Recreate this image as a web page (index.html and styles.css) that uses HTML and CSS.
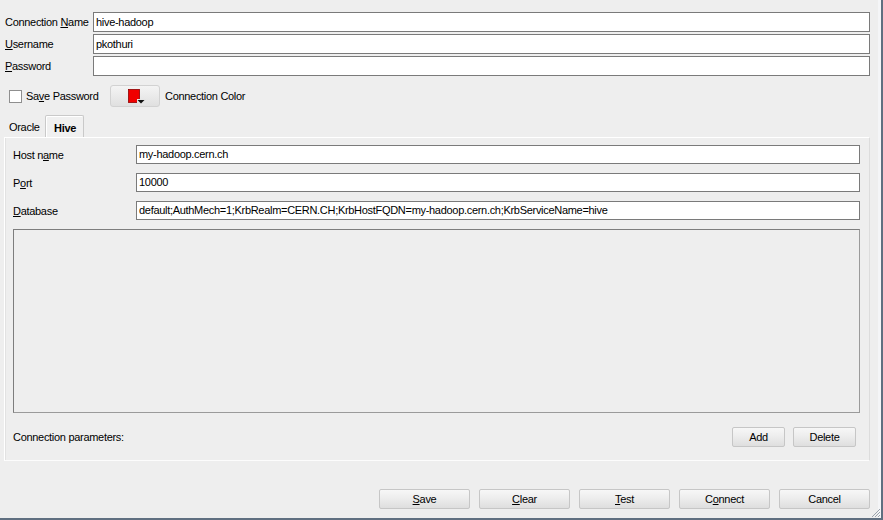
FILE: index.html
```html
<!DOCTYPE html>
<html lang="en">
<head>
    <meta charset="UTF-8">
    <title>New / Select Database Connection</title>
    <link rel="stylesheet" href="styles.css">
</head>
<body>
    <div class="dialog">
        <div class="fields">
            <label>Connection <u>N</u>ame</label>
            <div class="input">hive-hadoop</div>
            <label><u>U</u>sername</label>
            <div class="input">pkothuri</div>
            <label><u>P</u>assword</label>
            <div class="input"></div>
        </div>

        <div class="save-row">
            <span class="check"></span>
            <span class="save-label">Sa<u>v</u>e Password</span>
            <button class="color-btn">
                <svg width="20" height="18" viewBox="0 0 20 18">
                    <rect x="2.5" y="2.5" width="11" height="13" fill="#f00000" stroke="#900000" stroke-width="0.8"/>
                    <rect x="11" y="12" width="9" height="6" fill="#e4e4e4"/>
                    <path d="M11.5 13 L18.5 13 L15 16.5 Z" fill="#111"/>
                </svg>
            </button>
            <span>Connection Color</span>
        </div>

        <div class="tabs">
            <span class="tab">Oracle</span>
            <span class="tab active">Hive</span>
        </div>

        <div class="panel">
            <div class="panel-fields">
                <label>Host n<u>a</u>me</label>
                <div class="input">my-hadoop.cern.ch</div>
                <label>P<u>o</u>rt</label>
                <div class="input">10000</div>
                <label><u>D</u>atabase</label>
                <div class="input">default;AuthMech=1;KrbRealm=CERN.CH;KrbHostFQDN=my-hadoop.cern.ch;KrbServiceName=hive</div>
            </div>
            <div class="params"></div>
            <div class="params-bar">
                <span>Connection parameters:</span>
                <div class="params-buttons">
                    <button class="btn add">Add</button>
                    <button class="btn delete">Delete</button>
                </div>
            </div>
        </div>

        <div class="actions">
            <button class="btn wide"><u>S</u>ave</button>
            <button class="btn wide"><u>C</u>lear</button>
            <button class="btn wide"><u>T</u>est</button>
            <button class="btn wide">C<u>o</u>nnect</button>
            <button class="btn wide">Cancel</button>
        </div>

        <svg class="grip" width="11" height="11" viewBox="0 0 11 11">
            <path d="M10 2 L2 10 M10 5 L5 10 M10 8 L8 10" stroke="#9aa3ad" stroke-width="1"/>
        </svg>
    </div>
</body>
</html>
```

FILE: styles.css
```css
body{
    margin: 0;
    background-color: #eeeeee;
    font-family: "Liberation Sans", Arial, sans-serif;
    font-size: 11px;
    letter-spacing: -0.3px;
    color: #000;
}
u{
    text-underline-offset: 1px;
}
label, span{
    white-space: nowrap;
}
.dialog{
    position: relative;
    width: 883px;
    height: 520px;
    box-sizing: border-box;
    padding-top: 12px;
    border-right: 2px solid #5f6f80;
    border-bottom: 2px solid #5f6f80;
    box-shadow: inset -3px 0 0 #f4f5f7;
}
.fields{
    display: grid;
    grid-template-columns: 88px 1fr;
    row-gap: 2px;
    padding: 0 11px 0 5px;
    align-items: center;
}
.input{
    height: 20px;
    box-sizing: border-box;
    border: 1px solid #7a7a7a;
    background: #fff;
    padding: 0 2px;
    line-height: 18px;
    white-space: nowrap;
    overflow: hidden;
}
.save-row{
    display: flex;
    align-items: center;
    height: 22px;
    margin-top: 9px;
    padding-left: 9px;
}
.check{
    width: 11px;
    height: 11px;
    border: 1px solid #8f8f8f;
    background: #fff;
    margin-right: 4px;
}
.save-label{
    width: 84px;
}
.color-btn{
    width: 50px;
    height: 22px;
    margin-right: 5px;
    border: 1px solid #d2d2d2;
    border-radius: 3px;
    background: linear-gradient(#f4f4f4, #e0e0e0);
    padding: 0 0 0 2px;
    display: flex;
    align-items: center;
    justify-content: center;
}
.tabs{
    display: flex;
    margin-top: 8px;
    padding-left: 4px;
    height: 22px;
}
.tab{
    width: 40px;
    box-sizing: border-box;
    padding-left: 5px;
    line-height: 24px;
}
.tab.active{
    width: 39px;
    margin-left: 1px;
    padding-left: 8px;
    font-weight: bold;
    border: 1px solid #c9c9c9;
    border-bottom: none;
    border-radius: 2px 2px 0 0;
    background: #f0f0f0;
    box-shadow: inset 1px 1px 0 #fff;
}
.panel{
    margin-left: 4px;
    width: 866px;
    height: 324px;
    box-sizing: border-box;
    border: 1px solid #fff;
    border-right-color: #dcdcdc;
    border-bottom-color: #fcfcfc;
    box-shadow: inset 1px 0 0 #e2e2e2;
    padding: 7px 9px 0 8px;
}
.panel-fields{
    display: grid;
    grid-template-columns: 123px 1fr;
    row-gap: 9px;
    align-items: center;
}
.panel-fields .input{
    height: 19px;
    line-height: 17px;
}
.params{
    margin-top: 9px;
    height: 184px;
    box-sizing: border-box;
    border: 1px solid #7d7d7d;
    border-right-color: #9a9a9a;
    border-bottom-color: #9a9a9a;
}
.params-bar{
    display: flex;
    justify-content: space-between;
    align-items: center;
    margin-top: 14px;
    padding-right: 4px;
}
.params-buttons{
    display: flex;
    gap: 8px;
}
.btn{
    height: 20px;
    box-sizing: border-box;
    border: 1px solid #c6c6c6;
    border-radius: 2px;
    background: linear-gradient(#f7f7f7 0%, #ececec 50%, #dedede 100%);
    font-family: inherit;
    font-size: 11px;
    letter-spacing: inherit;
    color: #000;
    padding: 0;
}
.add{
    width: 53px;
}
.delete{
    width: 63px;
}
.actions{
    display: flex;
    justify-content: flex-end;
    gap: 9px;
    margin-top: 28px;
    padding-right: 11px;
}
.wide{
    width: 91px;
}
.grip{
    position: absolute;
    right: 0;
    bottom: 0;
}
```
